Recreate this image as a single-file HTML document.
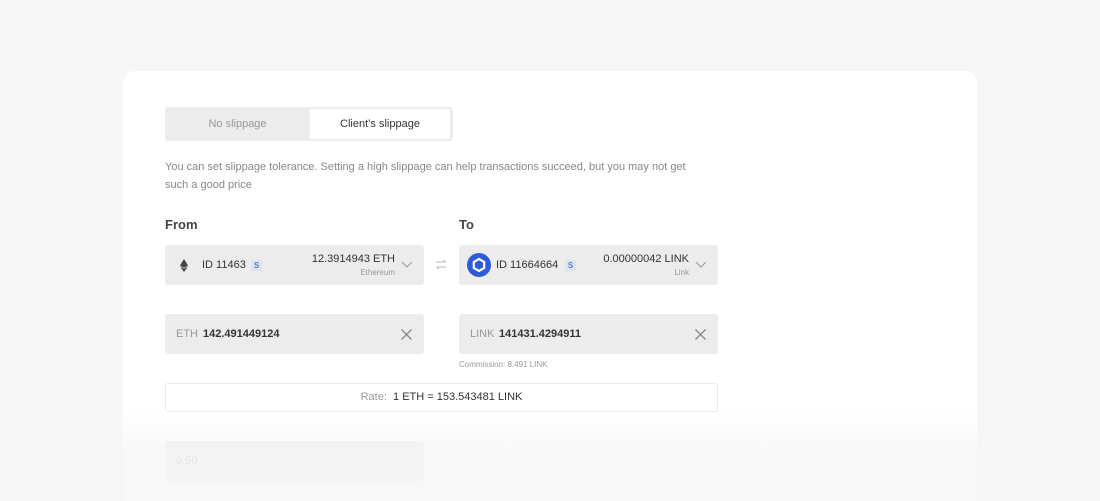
<!DOCTYPE html>
<html style="width:1100px;height:501px;overflow:hidden"><head><style>
*{box-sizing:border-box;margin:0;padding:0}
body{width:1100px;height:501px;background:#f6f6f7;font-family:"Liberation Sans",sans-serif;position:relative;overflow:hidden;color:#333}
.card{position:absolute;left:123px;top:71px;width:854px;height:430px;background:#fff;border-radius:12px 12px 0 0}
.abs{position:absolute}
.tabs{left:165px;top:107px;width:288px;height:34px;background:#ececec;border-radius:3px}
.tab2{position:absolute;left:145px;top:2px;width:140px;height:30px;background:#fff;font-size:11px;line-height:30px;text-align:center;color:#333}
.tab1{position:absolute;left:0;top:2px;width:145px;height:30px;font-size:11px;line-height:30px;text-align:center;color:#999}
.desc{left:165px;top:158px;font-size:11px;line-height:18px;color:#888;width:545px}
.lbl{font-size:13px;font-weight:bold;color:#444;top:217px}
.box{background:#ececec;border-radius:3px;height:40px}
.s{display:inline-block;width:11px;height:11px;background:#dfe3ea;color:#5a7ad6;font-size:8px;line-height:11px;text-align:center;font-weight:bold}
.fade{left:0;top:410px;width:1100px;height:91px;background:linear-gradient(rgba(246,246,247,0),rgba(246,246,247,.75) 45%,rgba(246,246,247,.8))}
</style></head><body>
<div class="card"></div>
<div class="abs tabs"><div class="tab1">No slippage</div><div class="tab2">Client’s slippage</div></div>
<div class="abs desc">You can set slippage tolerance. Setting a high slippage can help transactions succeed, but you may not get such a good price</div>
<div class="abs lbl" style="left:165px">From</div>
<div class="abs lbl" style="left:459px">To</div>

<div class="abs box" style="left:165px;top:245px;width:259px">
 <svg class="abs" style="left:15px;top:14px" width="8" height="13" viewBox="0 0 8 13"><path d="M4 0L0 6.5 4 9 8 6.5z M0 7.3L4 13 8 7.3 4 9.8z" fill="#444"/></svg>
 <span class="abs" style="left:37px;top:14px;font-size:11px;color:#333">ID 11463</span>
 <span class="abs s" style="left:86px;top:15px">S</span>
 <span class="abs" style="right:29px;top:8px;font-size:11px;color:#333">12.3914943 ETH</span>
 <span class="abs" style="right:29px;top:23px;font-size:8px;color:#999">Ethereum</span>
 <svg class="abs" style="right:11px;top:16px" width="12" height="7"><path d="M1 1l5 5 5-5" stroke="#999" fill="none"/></svg>
</div>
<svg class="abs" style="left:435px;top:259px" width="12" height="11"><path d="M1 3h10M8 1l2.5 2M11 8H1M4 10L1.5 8" stroke="#bbb" fill="none"/></svg>
<div class="abs box" style="left:459px;top:245px;width:259px">
 <svg class="abs" style="left:8px;top:8px" width="24" height="24" viewBox="0 0 24 24"><circle cx="12" cy="12" r="12" fill="#2f5bd8"/><path d="M12 6l5.2 3v6L12 18l-5.2-3V9z" fill="none" stroke="#fff" stroke-width="2.2"/></svg>
 <span class="abs" style="left:37px;top:14px;font-size:11px;color:#333">ID 11664664</span>
 <span class="abs s" style="left:106px;top:15px">S</span>
 <span class="abs" style="right:29px;top:8px;font-size:11px;color:#333">0.00000042 LINK</span>
 <span class="abs" style="right:29px;top:23px;font-size:8px;color:#999">Link</span>
 <svg class="abs" style="right:11px;top:16px" width="12" height="7"><path d="M1 1l5 5 5-5" stroke="#999" fill="none"/></svg>
</div>

<div class="abs box" style="left:165px;top:314px;width:259px">
 <span class="abs" style="left:11px;top:14px;font-size:11px;color:#999">ETH</span>
 <span class="abs" style="left:38px;top:14px;font-size:11px;color:#333;font-weight:bold">142.491449124</span>
 <svg class="abs" style="right:12px;top:15px" width="11" height="11"><path d="M.5.5l10 10M10.5.5l-10 10" stroke="#888" stroke-width="1.3"/></svg>
</div>
<div class="abs box" style="left:459px;top:314px;width:259px">
 <span class="abs" style="left:11px;top:14px;font-size:11px;color:#999">LINK</span>
 <span class="abs" style="left:40px;top:14px;font-size:11px;color:#333;font-weight:bold">141431.4294911</span>
 <svg class="abs" style="right:12px;top:15px" width="11" height="11"><path d="M.5.5l10 10M10.5.5l-10 10" stroke="#888" stroke-width="1.3"/></svg>
</div>
<div class="abs" style="left:459px;top:360px;font-size:8px;color:#999">Commission: 8.491 LINK</div>

<div class="abs" style="left:165px;top:383px;width:553px;height:29px;border:1px solid #eaeaea;border-radius:3px;text-align:center;line-height:27px;font-size:11px"><span style="color:#999">Rate:</span>&nbsp; <span style="color:#333">1 ETH = 153.543481 LINK</span></div>

<div class="abs box" style="left:165px;top:441px;width:259px;background:#eeeeee">
 <span class="abs" style="left:11px;top:14px;font-size:11px;color:#aaa">0.50</span>
</div>
<div class="abs fade"></div>
</body></html>
